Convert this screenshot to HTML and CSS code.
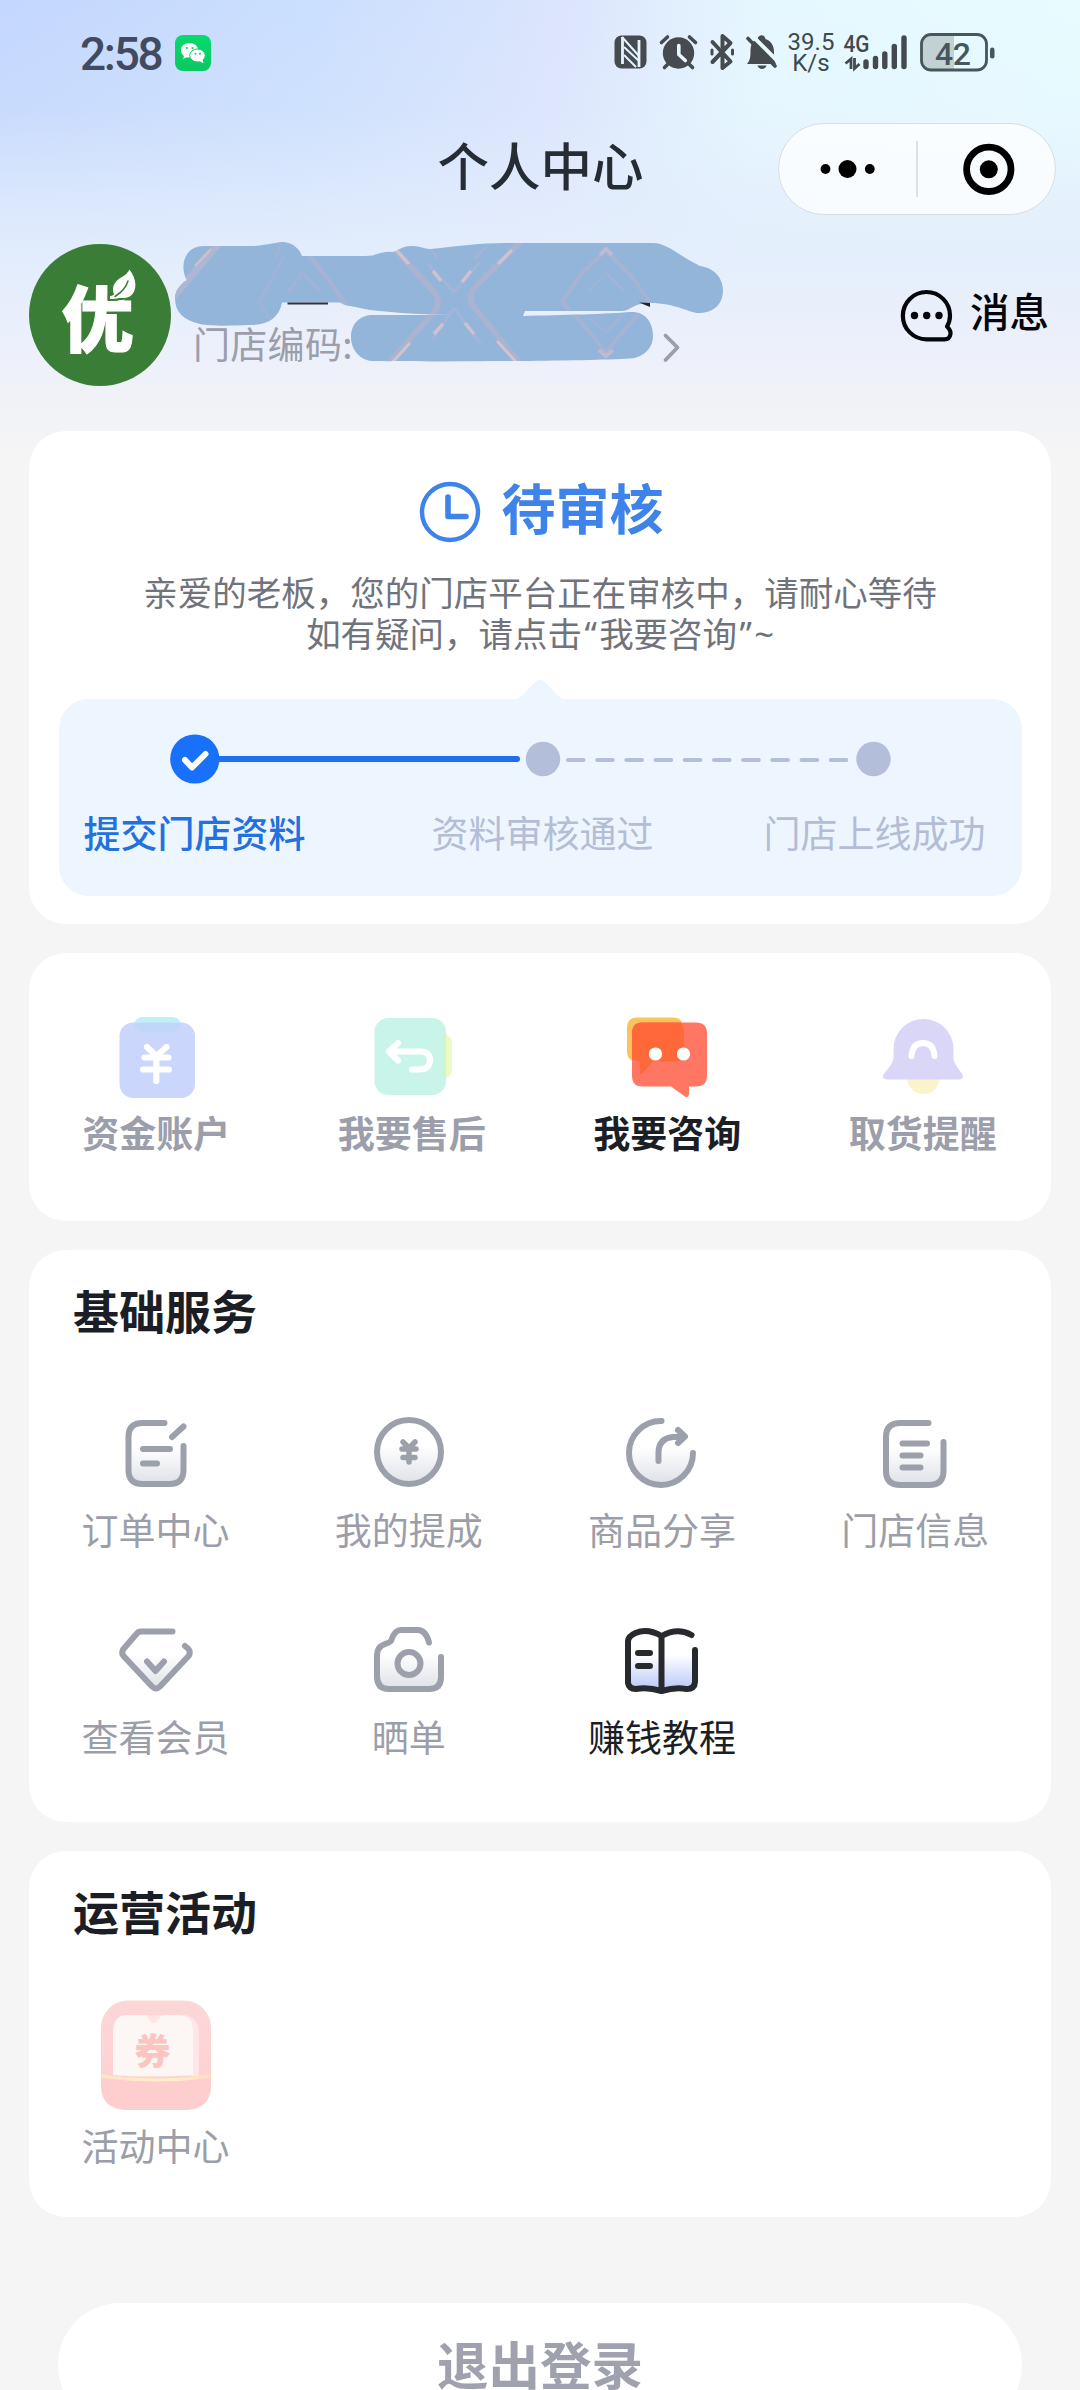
FILE: index.html
```html
<!DOCTYPE html>
<html lang="zh-CN">
<head>
<meta charset="utf-8">
<title>个人中心</title>
<link rel="stylesheet" href="styles.css">
</head>
<body>
<div class="page">
  <header class="status">
    <span class="clock">2:58</span>
    <svg class="wechat" viewBox="175 35 36 36" width="36" height="36">
      <defs><linearGradient id="wx" x1="0" y1="0" x2="0" y2="1"><stop offset="0" stop-color="#05dc6c"/><stop offset="1" stop-color="#0cc662"/></linearGradient></defs>
      <rect x="175" y="35" width="36" height="36" rx="8" fill="url(#wx)"/>
      <path d="M189.500 43c-4.800 0-8.500 3-8.500 7.200 0 2.500 1.200 4.400 3 5.700l-.8 3 3.400-1.700c1 .3 2 .4 3 .4 4.700 0 8.500-3.300 8.500-7.400s-3.800-7.200-8.600-7.200z" fill="#fff"/>
      <ellipse cx="197.500" cy="55.500" rx="7.800" ry="6.500" fill="#fff" stroke="#08d067" stroke-width="1"/>
      <path d="M199 61l4.500 2.300-.8-4z" fill="#fff"/>
      <g fill="#08d067"><circle cx="186.800" cy="48" r="1.100"/><circle cx="192.500" cy="48" r="1.100"/><circle cx="195.500" cy="53.800" r="1"/><circle cx="200" cy="53.800" r="1"/></g>
    </svg>
    <div class="system">
      <svg viewBox="610 32 43 40" width="43" height="40">
        <rect x="614.500" y="35.500" width="32" height="33" rx="7" fill="#464b50"/>
        <path d="M622.500 37v27M639 40v27" stroke="#e4f4fd" stroke-width="2.800" fill="none"/>
        <path d="M622 37l17 19M624 47l15 14M624 55l12 12" stroke="#e4f4fd" stroke-width="2" fill="none"/>
      </svg>
      <svg viewBox="653 32 51 40" width="51" height="40">
        <circle cx="678.500" cy="53" r="15.700" fill="#464b50"/>
        <path d="M661.500 42.500l6-5.500M695.500 42.500l-6-5.500M668 64l-3.500 3.500M689 64l3.500 3.500" stroke="#464b50" stroke-width="3.600" stroke-linecap="round"/>
        <path d="M678.800 45.500v9l6.500 6" stroke="#e7f8fe" stroke-width="3.600" stroke-linecap="round" stroke-linejoin="round" fill="none"/>
      </svg>
      <svg viewBox="704 32 36 40" width="36" height="40" fill="none" stroke="#464b50" stroke-width="4" stroke-linecap="round" stroke-linejoin="round">
        <path d="M712.500 42l18 19.500-8 6.500v-12M722.500 47v-11l8 7-18 19"/>
        <path d="M712 50v4M732.500 50v4" stroke-width="3"/>
      </svg>
      <svg viewBox="740 32 42 40" width="42" height="40">
        <path d="M747 64h29c-1.500-3-2-6-2-12 0-7-3.500-11.500-8.500-13-1-5-7-5-8 0-6 2-7 7-7 13 0 6-1 9-3.500 12z" fill="#464b50"/>
        <path d="M757.500 65.500h9c-1 4.500-8 4.500-9 0z" fill="#464b50"/>
        <path d="M751 34.500l28 28" stroke="#e7f8fe" stroke-width="4"/>
        <path d="M748 38.500l27 27.500" stroke="#464b50" stroke-width="3.600" stroke-linecap="round"/>
      </svg>
      <div class="speed"><span>39.5</span><span>K/s</span></div>
      <svg viewBox="840 32 75 44" width="75" height="44">
        <text x="843.500" y="52" class="net" textLength="26" lengthAdjust="spacingAndGlyphs">4G</text>
        <path d="M851 69V59l-5.500 4.500M854.500 58v10.500l5-4.500" fill="none" stroke="#43494e" stroke-width="2.800"/>
        <g stroke="#43494e" stroke-width="5.400" stroke-linecap="round"><path d="M866 62v4.500M875.500 58.500v8M884.800 54v12.500M894.300 46.500v20M904 38v28.500"/></g>
      </svg>
      <svg viewBox="915 30 84 44" width="84" height="44">
        <path d="M928 35.500h26v34h-26q-6-.5-6-8v-19q0-6 6-7z" fill="#c2d1d4"/>
        <rect x="921.500" y="34.500" width="65" height="35.500" rx="9.500" fill="none" stroke="#46565a" stroke-width="2.800"/>
        <rect x="990" y="47.500" width="4.500" height="11" rx="2.200" fill="#46565a"/>
        <text x="935" y="64.500" class="charge" textLength="36">42</text>
      </svg>
    </div>
  </header>

  <nav class="navbar">
    <h1>个人中心</h1>
    <div class="capsule">
      <svg viewBox="779 124 276 90" width="276" height="90">
        <circle cx="825.500" cy="169" r="4.900"/><circle cx="847.500" cy="169" r="9"/><circle cx="869.800" cy="169" r="4.900"/>
        <path d="M917 141v56" stroke="#d6d9dd" stroke-width="1.600"/>
        <circle cx="988.800" cy="169.300" r="22.200" fill="none" stroke="#000" stroke-width="6.800"/><circle cx="988.800" cy="169.300" r="9"/>
      </svg>
    </div>
  </nav>

  <section class="profile">
    <div class="avatar">
      <span>优</span>
      <svg viewBox="108 266 30 36" width="30" height="36">
        <path d="M129.500 269.500c7.500 10 8 21 1 26.500-3 2.300-8 2-11 2-3 .8-6 1-9.500 1v-3q2 0 4-1.500c-3-8 1-13.500 8-17.500 4-2.500 6-4.500 7.500-7.500z" fill="#fff" stroke="#397d36" stroke-width="4" paint-order="stroke"/>
        <path d="M128 281c-2 7-6 11-13 15.500" fill="none" stroke="#397d36" stroke-width="1.500" stroke-linecap="round"/>
      </svg>
    </div>
    <div class="store">
      <span class="code">门店编码:</span>
      <svg class="chevron" viewBox="662 332 20 31" width="20" height="31"><path d="M665.500 335.500l12 12-12 12.500" fill="none" stroke="#9b9eaa" stroke-width="3.800" stroke-linecap="round" stroke-linejoin="round"/></svg>
      <svg class="mask" viewBox="174 238 552 128" width="552" height="128">
        <defs><clipPath id="brush"><path d="M204 246H252C270 245 275 242 284 242C294 243 300 250 302 256H365C378 256 381 251 391 252C400 252 398 246 413 246C420 246 424 249 430 249C460 246 480 243 505 243H653C667 243 676 254 700 266C715 268 723 279 723 290C723 306 712 313 698 313C690 313 675 303 650 303C635 302 632 310 622 311H525L523 316C560 315 610 314 630 312C645 311 653 322 653 336C653 350 641 358 630 358.500C590 361 450 362 372 361C360 360 351 350 351 337C351 322 362 314 375 315H466C430 315 395 313 370 310L345 305L340 302.500H282C279 318 268 325 250 325C225 326 210 326 200 324C183 320 175 312 175 298C175 288 185 281 187 280C180 270 182 246 204 246Z"/></clipPath></defs>
        <g fill="none" stroke-linejoin="round" clip-path="url(#brush)">
          <path d="M170 235h560v135h-560z" fill="#93b5da"/>
          <path d="M222 240l-48 56" stroke="#adb6d3" stroke-width="7"/><path d="M211 249l-16 17" stroke="#cdbfce" stroke-width="2.500"/>
          <path d="M394 248l40 44q8 10 0 20l-48 54M522 240l-46 46q-10 11-2 21l47 58" stroke="#aab3d0" stroke-width="6"/>
          <path d="M396 250l13 14M512 250l-14 14M410 343l-20 22M497 341l20 22" stroke="#d3c2cf" stroke-width="3"/>
          <path d="M428 264l26 28 26-30M432 340l22-32 27 36M430 249l8 9M486 247l-12 12" stroke="#a6b5d6" stroke-width="2.500"/>
          <path d="M433 271l8 10M462 282l9-11M434 334l9-10M465 323l9 11" stroke="#cfc1d2" stroke-width="3.500"/>
          <path d="M282 242l-7 17M284 256l-25 46 11 17M303 273l-16 20M303 273l18 19" stroke="#a4b3d5" stroke-width="2.200"/>
          <path d="M308 254l22 28 18 26" stroke="#a9b3d1" stroke-width="4"/>
          <path d="M562 302l19-28 25-24 27 28 17 25M562 302l7 8M575 315l31 37 32-38" stroke="#a7b3d3" stroke-width="4"/>
          <path d="M588 291l18-18 18 18M590 319l16 13 17-17" stroke="#a4b4d6" stroke-width="2"/>
          <path d="M600 255l6-6 6 6M599 350l7 6 7-6" stroke="#bebad1" stroke-width="4"/>
        </g>
        <path d="M287.500 303.500H328" stroke="#30343d" stroke-width="2"/><path d="M639 302.500l11 .5v4z" fill="#20242b"/>
      </svg>
    </div>
    <div class="message">
      <svg viewBox="900 289 54 54" width="54" height="54">
        <path d="M926.500 292a23.500 23.500 0 0 1 23.500 23.500q0 6-3 11 4 4 3.500 7.500-.8 5.300-6 5.300H926.500a23.600 23.600 0 0 1 0-47.300z" fill="none" stroke="#05060b" stroke-width="4.200" stroke-linejoin="round"/>
        <g fill="#05060b"><circle cx="914.500" cy="315.500" r="3.700"/><circle cx="926.700" cy="315.500" r="3.700"/><circle cx="939" cy="315.500" r="3.700"/></g>
      </svg>
      <span>消息</span>
    </div>
  </section>

  <main class="cards">
    <section class="card review">
      <h2>
        <svg viewBox="419 481 62 62" width="62" height="62" fill="none" stroke="#3d83ea"><circle cx="450" cy="512" r="28" stroke-width="4.400"/><path d="M448 497v19.500h18" stroke-width="5.600" stroke-linecap="round" stroke-linejoin="round"/></svg>
        <span>待审核</span>
      </h2>
      <p>亲爱的老板，您的门店平台正在审核中，请耐心等待<br>如有疑问，请点击<span class="q">“</span>我要咨询<span class="q">”</span><span class="tilde">~</span></p>
      <svg class="tip" viewBox="517 678 48 21" width="48" height="21"><path d="M517 699q4-1 7-4l12-13q5-5 10 0l12 13q3 3 7 4z" fill="#edf5ff"/></svg>
      <div class="steps">
        <svg class="track" viewBox="84 733 900 52" width="900" height="52">
          <path d="M194 759h323" stroke="#1f6fee" stroke-width="6" stroke-linecap="round"/>
          <circle cx="194.800" cy="759" r="24.600" fill="#1970fa"/>
          <path d="M185 760l7 7.500 13.500-13.500" fill="none" stroke="#fff" stroke-width="6" stroke-linecap="round" stroke-linejoin="round"/>
          <circle cx="543" cy="759" r="17.200" fill="#b3bfda"/><circle cx="873.500" cy="759" r="17.200" fill="#b3bfda"/>
          <path d="M568 760h283" stroke="#b3bfda" stroke-width="4.200" stroke-linecap="round" stroke-dasharray="15.500 13.700"/>
        </svg>
        <div class="labels"><span class="done">提交门店资料</span><span class="next">资料审核通过</span><span>门店上线成功</span></div>
      </div>
    </section>

    <section class="card quick">
      <div class="entry">
        <svg viewBox="117 1015 80 84" width="80" height="84">
          <path d="M134 1024q2-7 9-7h29q7 0 9 7z" fill="#bfeff9"/><rect x="119.500" y="1022.500" width="75.500" height="75.500" rx="14" fill="#cad6fb"/><path d="M134 1023h47v2q-4 7-10 7h-27q-7 0-10-7z" fill="#bfd7fb"/>
          <path d="M147 1047l9.500 9 10-9M144.500 1057.500h24M143 1069.500h26M156.300 1057v24" fill="none" stroke="#fff" stroke-width="6.200" stroke-linecap="round" stroke-linejoin="round"/>
        </svg><span>资金账户</span>
      </div>
      <div class="entry">
        <svg viewBox="372 1015 80 84" width="80" height="84">
          <path d="M440 1033q12 2 12 9v29q0 7-12 9z" fill="#eefac6"/><rect x="374.500" y="1018" width="71.500" height="77" rx="14" fill="#c9f4e9"/><path d="M446 1034v45q-5-2-5-9v-27q0-7 5-9z" fill="#c9f5d9"/>
          <path d="M398 1043l-9 8.500 9 9M390 1051.500h30c7 0 10 3.500 10 9s-4 9-10 9h-8" fill="none" stroke="#fff" stroke-width="6.200" stroke-linecap="round" stroke-linejoin="round"/>
        </svg><span>我要售后</span>
      </div>
      <div class="entry on">
        <svg viewBox="627 1015 84 84" width="84" height="84">
          <path d="M638 1017.500h36q10 0 10 11v24q0 9-9 9h-37q-10 0-10-11v-22q0-11 10-11z" fill="#fbc35b"/>
          <path d="M643 1022.500h54q11 0 11 11v42q0 11-11 11h-7v8q-1 4-4 2l-14-10h-29q-10 0-10-11v-42q0-11 10-11z" fill="#ff7663"/>
          <path d="M643 1022.500h39q3 4 3 12v19q0 8-8 8h-23l-11 12q-2 2-2-1v-11l-8-2v-26q0-11 10-11z" fill="#ff6838"/>
          <circle cx="656.500" cy="1054" r="6.600" fill="#fff"/><circle cx="684.500" cy="1054" r="6.600" fill="#fff"/>
        </svg><span>我要咨询</span>
      </div>
      <div class="entry">
        <svg viewBox="883 1015 80 84" width="80" height="84">
          <path d="M906 1076h34q-2 18-16.500 18T906 1076z" fill="#fbf4cb"/>
          <path d="M893.500 1049a30 30 0 0 1 60 0v9q0 5 8 15c3 4 1 6.500-3 6.500h-71c-4 0-6-2.500-3-6.500q9-10 9-15z" fill="#dad6f8"/>
          <path d="M911.500 1056q1-13 11.500-13t11.500 13" fill="none" stroke="#fff" stroke-width="6" stroke-linecap="round"/>
        </svg><span>取货提醒</span>
      </div>
    </section>

    <section class="card services">
      <h3>基础服务</h3>
      <div class="grid">
        <div class="item">
          <svg viewBox="117 1414 78 76" width="78" height="76"><defs><linearGradient id="fog" x1="0" y1="0" x2="0" y2="1"><stop offset=".4" stop-color="#fff"/><stop offset="1" stop-color="#dfe1e7"/></linearGradient></defs>
            <rect x="128" y="1423" width="55" height="61" rx="13" fill="url(#fog)" stroke="none"/>
            <path d="M164.500 1423h-22q-14 0-14 14v33q0 14 14 14h27q14 0 14-14v-24M172 1437l11.500-10.500M143 1449h27M143 1463.500h14"/></svg>
          <span>订单中心</span>
        </div>
        <div class="item">
          <svg viewBox="370 1414 78 76" width="78" height="76"><circle cx="409" cy="1452" r="32" fill="url(#fog)"/>
            <path d="M403 1442l6 6 6-6M402 1449h14M403 1457.500h12M409 1449v13" stroke-width="5.500"/></svg>
          <span>我的提成</span>
        </div>
        <div class="item">
          <svg viewBox="624 1414 78 76" width="78" height="76"><circle cx="662" cy="1453" r="31" fill="url(#fog)" stroke="none"/>
            <path d="M662.500 1421a32 32 0 1 0 31.500 32M659.500 1461v-8q0-15 15-16h10M679 1430l7 6.500-7 6.500"/></svg>
          <span>商品分享</span>
        </div>
        <div class="item">
          <svg viewBox="876 1414 78 76" width="78" height="76"><rect x="886" y="1423" width="57" height="62" rx="13" fill="url(#fog)" stroke="none"/>
            <path d="M928.500 1423h-28q-14.500 0-14.500 14v34q0 14 14.500 14h28.500q14.500 0 14.500-14v-29M902.500 1443.500h24.500M902.500 1455.500h18M902.500 1467.500h18"/></svg>
          <span>门店信息</span>
        </div>
        <div class="item">
          <svg viewBox="117 1621 78 76" width="78" height="76"><path d="M122 1655l17-24h33l17 20-33 38z" fill="url(#fog)" stroke="none"/>
            <path d="M172.500 1631.500H141q-3 0-5 3l-13 15q-2 4 1 7l28 30q4 4 8 0l29-31q2-4-1-7l-3-2.500M147 1661.500l8.500 9.500 8.500-9.500"/></svg>
          <span>查看会员</span>
        </div>
        <div class="item">
          <svg viewBox="370 1621 78 76" width="78" height="76"><path d="M377 1655l18-24h25l21 24v34h-64z" fill="url(#fog)" stroke="none"/>
            <path d="M429 1642.500q-3-12-11-12.500h-17q-5 0-8 6l-2 5q-2 2-6 3-8 3-8 11v21q0 13 12 13h40q12 0 12-12v-20"/><circle cx="409" cy="1663.500" r="11.500"/></svg>
          <span>晒单</span>
        </div>
        <div class="item on">
          <svg viewBox="624 1621 78 76" width="78" height="76"><defs><linearGradient id="sky" x1="0" y1="0" x2="0" y2="1"><stop offset=".4" stop-color="#fff"/><stop offset="1" stop-color="#b9c9fa"/></linearGradient></defs>
            <path d="M629 1640q17-14 33-3 16-10 33 0v49q-16-2-33 3-16-5-33 0z" fill="url(#sky)" stroke="none"/>
            <path d="M692.500 1635q-14-8-30 1-14-8-26-3-7 3-7.500 8v42q1 6 8 6 12-2 25.500 2 14-4 25-2 8 0 8.500-7v-32M662.500 1636v54M639 1653h12M639 1666h12" /></svg>
          <span>赚钱教程</span>
        </div>
      </div>
    </section>

    <section class="card events">
      <h3>运营活动</h3>
      <div class="grid">
        <div class="item">
          <div class="ticket">
            <svg viewBox="101 1999 110 110" width="110" height="110">
              <defs><linearGradient id="rose" x1="0" y1="0" x2="0" y2="1"><stop offset="0" stop-color="#fcd7d8"/><stop offset=".65" stop-color="#ffd2d2"/><stop offset="1" stop-color="#fdcdcd"/></linearGradient><linearGradient id="gold"><stop offset="0" stop-color="#ffe2c4"/><stop offset=".6" stop-color="#fff1cc"/><stop offset="1" stop-color="#ffdcc4"/></linearGradient></defs>
              <rect x="101" y="1999.500" width="110" height="109.500" rx="27" fill="url(#rose)"/>
              <path d="M125 2014h60q14 3 14 18v43h-80v-43q0-15 6-18z" fill="#fde6e5"/>
              <path d="M125 2014h20q2 0 3 3 2 5 6 5t6-5q1-3 3-3h18q12 2 12 15v45q-40 3-80 0v-43q0-15 12-17z" fill="#fcf6f5"/>
              <path d="M101 2076q55 6 110 0v8q0 25-27 25h-56q-27 0-27-25z" fill="#fecdcd"/>
              <path d="M101 2073q55 9 110 0v4q-55 7-110 0z" fill="url(#gold)"/>
            </svg>
            <span class="seal">券</span>
          </div>
          <span>活动中心</span>
        </div>
      </div>
    </section>

    <button class="logout">退出登录</button>
  </main>
</div>
</body>
</html>
```
FILE: styles.css
```css
* { box-sizing: border-box; margin: 0; padding: 0; }
html, body { width: 1080px; height: 2390px; overflow: hidden; }
body { font-family: "Noto Sans CJK SC", sans-serif; background: #f5f5f5; color: #1c1e25; }
svg { display: block; flex: none; }
.page {
  height: 2390px; overflow: hidden;
  background:
    linear-gradient(180deg, rgba(227,237,252,0) 0, rgba(227,237,252,.15) 110px, rgba(227,237,252,.7) 200px, rgba(228,238,252,.94) 260px, #ecf0fb 350px, #f1f2f7 400px, #f5f5f5 460px) 0 0 / 100% 460px no-repeat,
    linear-gradient(97deg, #c4d7fd 0, #cbdffe 28%, #dce5fc 50%, #e6f8ff 68%, #e8fcff 100%) 0 0 / 100% 460px no-repeat,
    #f5f5f5;
}

.status { height: 104px; display: flex; align-items: flex-start; padding: 32px 81px 0 80px; }
.clock { font: 500 46px/44px Roboto, sans-serif; letter-spacing: -2.300px; color: #414a5e; width: 95px; white-space: nowrap; }
.wechat { margin-top: 3px; }
.system { display: flex; margin-left: auto; }
.system svg:last-child { margin-top: -2px; }
.speed { width: 58px; display: flex; flex-direction: column; align-items: center; font: 400 24px/21px Roboto, sans-serif; color: #3c4a50; }
.net { font: 500 23px Roboto, sans-serif; fill: #43494e; }
.charge { font: 500 32px Roboto, sans-serif; fill: #46565a; }

.navbar { height: 130px; display: grid; grid-template-columns: 1fr auto 1fr; padding: 19px 24px 0 25px; }
.navbar h1 { grid-column: 2; font-size: 51.500px; line-height: 82px; font-weight: 500; color: #252c33; }
.capsule { justify-self: end; width: 278px; height: 92px; border: 1.500px solid #d9dde3; border-radius: 46px; background: rgba(255,255,255,.75); }

.profile { height: 197px; display: flex; padding: 10px 31px 0 29px; }
.avatar { width: 142px; height: 142px; border-radius: 50%; background: #397d36; position: relative; display: flex; justify-content: center; }
.avatar span { color: #fff; font-size: 72px; font-weight: 900; line-height: 142px; padding-right: 5px; -webkit-text-stroke: 1px #fff; }
.avatar svg { position: absolute; left: 79px; top: 22px; }
.store { position: relative; display: flex; flex: 1; height: 142px; padding-left: 22px; align-items: flex-start; }
.code { width: 469px; padding-top: 74px; font-size: 37px; line-height: 50px; color: #9b9eaa; letter-spacing: .3px; }
.chevron { margin-top: 88px; }
.mask { position: absolute; left: 3px; top: -6px; }
.message { display: flex; align-items: flex-start; gap: 16px; padding-top: 45px; color: #05060b; font-size: 39.500px; line-height: 41px; font-weight: 500; white-space: nowrap; }

.cards { display: flex; flex-direction: column; gap: 29px; padding: 0 29px; }
.card { background: #fff; border-radius: 37px; flex: none; }
.review { height: 493px; display: flex; flex-direction: column; align-items: center; padding-top: 50px; }
.review h2 { display: flex; align-items: center; gap: 21px; height: 62px; padding-left: 2px; color: #3d83ea; font-size: 54px; font-weight: 700; }
.review h2 span { line-height: 60px; margin-top: -10px; }
.review p { margin-top: 28px; text-align: center; font-size: 34.500px; line-height: 40.700px; color: #70737c; white-space: nowrap; }
.q { display: inline-block; width: 17px; font-family: "Noto Sans", sans-serif; text-align: center; line-height: 1; }
.tilde { font-family: "Noto Sans", sans-serif; line-height: 1; }
.tip { margin-top: 26px; }
.steps { width: 963px; height: 197px; border-radius: 30px; background: #edf5ff; padding: 34px 0 0 25px; }
.labels { display: flex; justify-content: space-between; width: 902px; margin-top: 22px; font-size: 37px; line-height: 50px; color: #b3bdd6; }
.next { padding-left: 16px; }
.done { color: #2370df; font-weight: 500; }

.quick { height: 268px; display: grid; grid-template-columns: repeat(4, 1fr); padding-top: 62px; }
.entry { display: flex; flex-direction: column; align-items: center; gap: 8px; font-size: 37px; font-weight: 700; line-height: 50px; color: #9c9fab; }
.entry span { margin-left: -1px; }
.on, .entry.on { color: #1c1e25; }

.services { height: 572px; padding-top: 34px; }
.card h3 { padding-left: 44px; font-size: 46px; line-height: 50px; font-weight: 700; }
.grid { display: grid; grid-template-columns: repeat(4, 253.200px); }
.services .grid { padding-top: 80px; grid-auto-rows: 207px; }
.item { display: flex; flex-direction: column; align-items: center; font-size: 37px; line-height: 50px; color: #9b9ea8; }
.item > svg { fill: none; stroke: #9ba0ab; stroke-width: 6px; stroke-linecap: round; stroke-linejoin: round; }
.item > svg + span { margin-top: 14px; }
.item.on { color: #1c1e25; }
.item.on > svg { stroke: #26292d; }
.events { height: 366px; padding-top: 34px; }
.events .grid { padding-top: 65px; }
.ticket { position: relative; margin-bottom: 10px; }
.seal { position: absolute; left: 34px; top: 26px; font-size: 36px; line-height: 46px; font-weight: 900; color: #fdc4c0; }
.logout { margin: 57px 29px 0; height: 124px; border: 0; border-radius: 62px; background: #fff; font: 700 51.500px/120px "Noto Sans CJK SC", sans-serif; padding-bottom: 4px; color: #9fa2ae; }
```
